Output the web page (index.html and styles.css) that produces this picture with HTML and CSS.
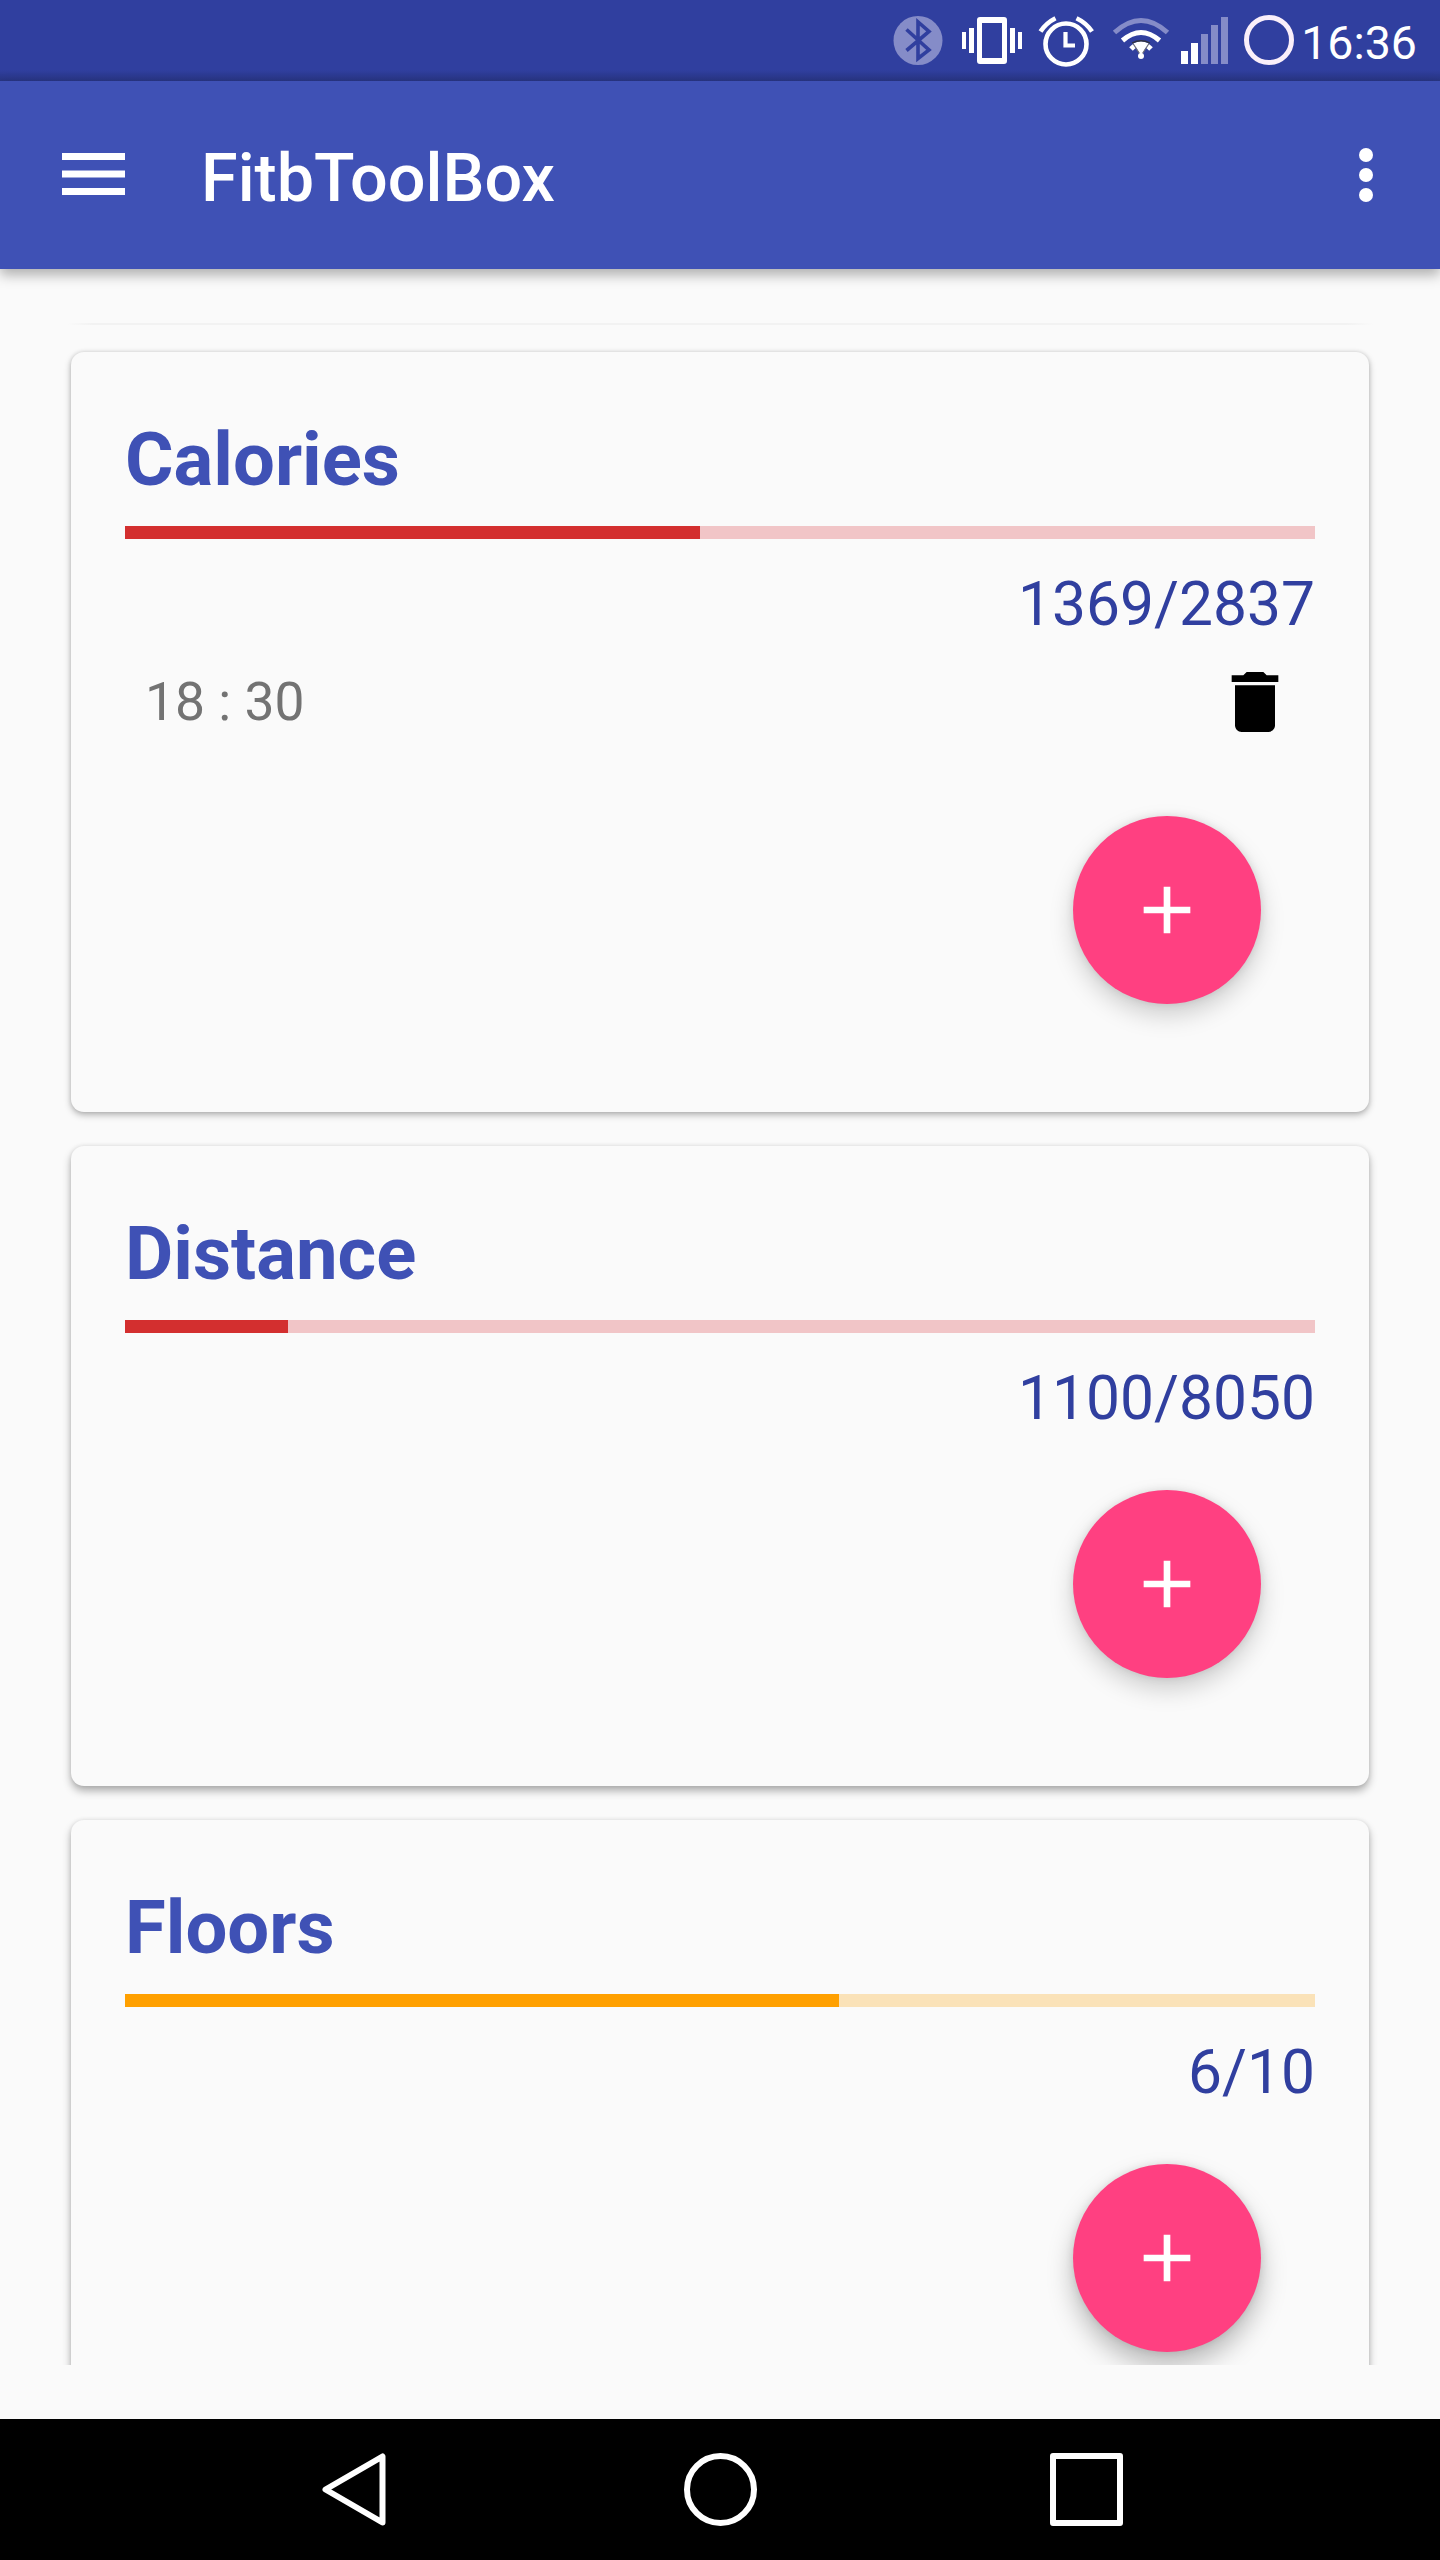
FILE: index.html
```html
<!DOCTYPE html>
<html lang="en">
<head>
    <meta charset="UTF-8">
    <meta name="viewport" content="width=device-width, initial-scale=1.0">
    <title>FitbToolBox</title>
    <link rel="stylesheet" href="styles.css">
</head>
<body>
    <div class="status-bar">
        <svg class="status-icons" width="420" height="81" viewBox="880 0 420 81">
            <!-- bluetooth -->
            <circle cx="918" cy="40.5" r="24.5" fill="#858cc8"/>
            <path d="M906.5 29.5 L929 50 L918 58.5 V22 L929 31.5 L906.5 50.5" fill="none" stroke="#303f9f" stroke-width="3.6"/>
            <!-- vibrate -->
            <path fill="#fff" fill-rule="evenodd" d="M980 17h24q3 0 3 3v41q0 3-3 3h-24q-3 0-3-3V20q0-3 3-3zM982 23v35h20V23z"/>
            <path fill="#fff" d="M962 32h4v17h-4zM969 28h5v25h-5zM1010 28h5v25h-5zM1018 32h4v17h-4z"/>
            <!-- alarm -->
            <circle cx="1066" cy="44" r="20.5" fill="none" stroke="#fff" stroke-width="4.6"/>
            <path d="M1065.5 32v13.5h9.5" fill="none" stroke="#fff" stroke-width="4.2"/>
            <path d="M1040.5 31.5 Q1046 23 1055.5 18.2 M1092 31.5 Q1086.5 23 1076.5 18.2" fill="none" stroke="#fff" stroke-width="4.6"/>
            <!-- wifi -->
            <path d="M1114.5 32.5 Q1141 8.5 1167.5 32.5" fill="none" stroke="#858cc8" stroke-width="5"/>
            <path d="M1122.5 40.5 Q1141 24.5 1159.5 40.5" fill="none" stroke="#fff" stroke-width="5"/>
            <path d="M1131 49 Q1141 38.5 1151 49" fill="none" stroke="#fff" stroke-width="5"/>
            <path d="M1133.5 43h15l-7.5 13z" fill="#fff"/>
            <path d="M1133 43.5 L1140.5 55 M1149 43.5 L1141.5 55" fill="none" stroke="#6b6d78" stroke-width="1.2"/>
            <path d="M1132 43 Q1141 38.5 1150 43" fill="none" stroke="#33353f" stroke-width="1.3"/>
            <circle cx="1141" cy="56" r="3" fill="#fff"/>
            <!-- signal -->
            <path fill="#fff" d="M1181 51h7v13h-7zM1191 43h7v21h-7z"/>
            <path fill="#858cc8" d="M1201 34h7v30h-7zM1211 25h7v39h-7zM1221 17h7v47h-7z"/>
            <!-- battery -->
            <circle cx="1269" cy="40" r="22.5" fill="none" stroke="#faeffa" stroke-width="5"/>
        </svg>
        <span class="clock">16:36</span>
    </div>

    <header class="toolbar">
        <svg class="menu-icon" width="63" height="48" viewBox="0 0 63 48">
            <path d="M0 1h63v7H0zM0 18.5h63v7H0zM0 36h63v7H0z" fill="#fff"/>
        </svg>
        <h1>FitbToolBox</h1>
        <svg class="more-icon" width="14" height="54" viewBox="0 0 14 54">
            <circle cx="7" cy="7" r="7" fill="#fff"/>
            <circle cx="7" cy="27" r="7" fill="#fff"/>
            <circle cx="7" cy="47" r="7" fill="#fff"/>
        </svg>
    </header>

    <main class="content">
        <div class="card-list">
            <div class="edge"></div>

            <section class="card card-first">
                <h2>Calories</h2>
                <div class="progress red"><div class="progress-bar" style="width: 48.32%"></div></div>
                <p class="value">1369/2837</p>
                <div class="alarm">
                    <span>18 : 30</span>
                    <svg width="80" height="80" viewBox="0 0 24 24">
                        <path d="M6 19c0 1.1.9 2 2 2h8c1.1 0 2-.9 2-2V7H6v12zM19 4h-3.5l-1-1h-5l-1 1H5v2h14V4z"/>
                    </svg>
                </div>
                <button class="fab" aria-label="Add">
                    <svg width="80" height="80" viewBox="0 0 24 24"><path fill="#fff" d="M19 13h-6v6h-2v-6H5v-2h6V5h2v6h6v2z"/></svg>
                </button>
            </section>

            <section class="card">
                <h2>Distance</h2>
                <div class="progress red"><div class="progress-bar" style="width: 13.66%"></div></div>
                <p class="value">1100/8050</p>
                <button class="fab" aria-label="Add">
                    <svg width="80" height="80" viewBox="0 0 24 24"><path fill="#fff" d="M19 13h-6v6h-2v-6H5v-2h6V5h2v6h6v2z"/></svg>
                </button>
            </section>

            <section class="card card-last">
                <h2>Floors</h2>
                <div class="progress orange"><div class="progress-bar" style="width: 60%"></div></div>
                <p class="value">6/10</p>
                <button class="fab" aria-label="Add">
                    <svg width="80" height="80" viewBox="0 0 24 24"><path fill="#fff" d="M19 13h-6v6h-2v-6H5v-2h6V5h2v6h6v2z"/></svg>
                </button>
            </section>
        </div>
    </main>

    <nav class="nav-bar">
        <svg width="64" height="73" viewBox="0 0 64 73"><path d="M60.5 3.5V69.5L3.5 36.5z"/></svg>
        <svg width="73" height="73" viewBox="0 0 73 73"><circle cx="36.5" cy="36.5" r="33.5"/></svg>
        <svg width="73" height="73" viewBox="0 0 73 73"><rect x="3" y="3" width="67" height="67"/></svg>
    </nav>
</body>
</html>
```

FILE: styles.css
```css
* { margin: 0; padding: 0; box-sizing: border-box; }
body {
    width: 1440px;
    height: 2560px;
    display: flex;
    flex-direction: column;
    overflow: hidden;
    background: #fafafa;
    font-family: Roboto, sans-serif;
}
.status-bar {
    height: 81px;
    flex: none;
    display: flex;
    justify-content: flex-end;
    padding-right: 23px;
    background: linear-gradient(#303f9f 0, #303f9f 70px, #283583 81px);
}
.status-icons {
    flex: none;
}
.clock {
    width: 117px;
    color: #fff;
    font-size: 46.5px;
    line-height: 86px;
    text-align: right;
    white-space: nowrap;
}
.toolbar {
    position: relative;
    height: 188px;
    flex: none;
    display: flex;
    align-items: center;
    padding: 0 67px 0 62px;
    background: #3f51b5;
    box-shadow: 0 6px 12px rgba(0,0,0,0.3);
}
.menu-icon {
    margin-bottom: -2px;
}
.toolbar h1 {
    flex: 1;
    margin-left: 76px;
    color: #fff;
    font-size: 66.5px;
    font-weight: 500;
    line-height: 80px;
    margin-top: 6px;
}
.content {
    flex: 1;
    min-height: 0;
    padding: 54px 0;
}
.card-list {
    height: 100%;
    padding: 0 71px;
    overflow: hidden;
}
/* shadow left by the card scrolled above */
.edge {
    height: 2px;
    margin: 0 -4px 27px;
    background: linear-gradient(90deg, transparent, #f2f2f2 2%, #f2f2f2 98%, transparent);
}
.card {
    display: flex;
    flex-direction: column;
    height: 640px;
    margin-bottom: 34px;
    padding: 54px;
    border-radius: 13px;
    background: #fafafa;
    box-shadow: 0 5px 8px rgba(0,0,0,0.3), 0 0 4px rgba(0,0,0,0.1);
}
.card-first {
    height: 760px;
    box-shadow: 0 3px 7px rgba(0,0,0,0.28), 0 0 4px rgba(0,0,0,0.12);
}
.card h2 {
    height: 120px;
    color: #3f51b5;
    font-size: 74.25px;
    font-weight: 700;
    line-height: 108px;
}
.progress {
    height: 13px;
    flex: none;
}
.progress-bar {
    height: 100%;
}
.red {
    background: #f1c5c7;
}
.red .progress-bar {
    background: #d32f2f;
}
.orange {
    background: #fae2b8;
}
.orange .progress-bar {
    background: #ffa000;
}
.value {
    margin-top: 30px;
    color: #303f9f;
    font-size: 60.5px;
    line-height: 71px;
    text-align: right;
}
.alarm {
    display: flex;
    justify-content: space-between;
    align-items: center;
    height: 81px;
    margin: 21px 20px 0 20px;
    color: #737373;
    font-size: 53.4px;
}
.fab {
    display: flex;
    align-items: center;
    justify-content: center;
    width: 188px;
    height: 188px;
    flex: none;
    margin: auto 54px 54px auto;
    border: none;
    border-radius: 50%;
    background: #ff4081;
    box-shadow: 0 11px 24px rgba(0,0,0,0.18), 0 0 8px rgba(0,0,0,0.1);
}
.card-last .fab {
    box-shadow: 0 14px 26px rgba(0,0,0,0.26), 0 0 8px rgba(0,0,0,0.1);
}
.nav-bar {
    height: 141px;
    flex: none;
    display: flex;
    align-items: center;
    padding-left: 322px;
    background: #000;
}
.nav-bar svg {
    margin-right: 293px;
    fill: none;
    stroke: #fff;
    stroke-width: 6;
    stroke-linejoin: round;
}
.nav-bar svg:first-child {
    margin-right: 298px;
}
```
